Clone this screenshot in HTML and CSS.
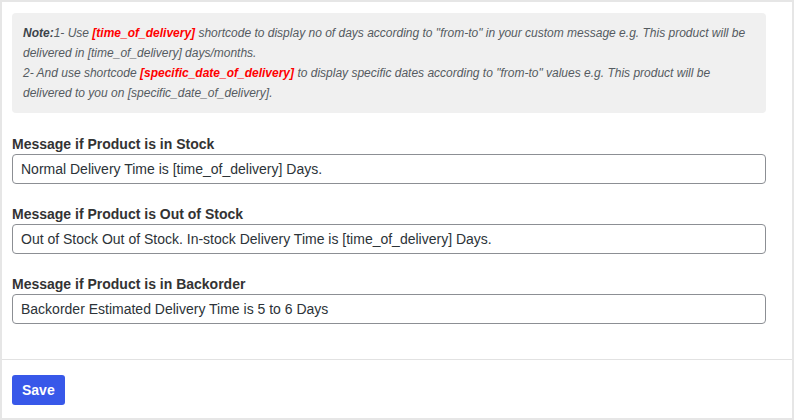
FILE: index.html
```html
<!DOCTYPE html>
<html>
<head>
<meta charset="utf-8">
<link rel="stylesheet" href="styles.css">
</head>
<body>
<div class="panel">
  <div class="content">
    <div class="note">
      <b class="note-label">Note:</b>1- Use <b class="code">[time_of_delivery]</b> shortcode to display no of days according to "from-to" in your custom message e.g. This product will be delivered in [time_of_delivery] days/months.<br>
      2- And use shortcode <b class="code">[specific_date_of_delivery]</b> to display specific dates according to "from-to" values e.g. This product will be delivered to you on [specific_date_of_delivery].
    </div>
    <div class="field">
      <label class="field-label">Message if Product is in Stock</label>
      <input class="field-input" type="text" value="Normal Delivery Time is [time_of_delivery] Days.">
    </div>
    <div class="field">
      <label class="field-label">Message if Product is Out of Stock</label>
      <input class="field-input" type="text" value="Out of Stock Out of Stock. In-stock Delivery Time is [time_of_delivery] Days.">
    </div>
    <div class="field">
      <label class="field-label">Message if Product is in Backorder</label>
      <input class="field-input" type="text" value="Backorder Estimated Delivery Time is 5 to 6 Days">
    </div>
  </div>
  <div class="footer">
    <button class="save-btn" type="button">Save</button>
  </div>
</div>
</body>
</html>
```
FILE: styles.css
```css
* { box-sizing: border-box; }
html, body { margin: 0; padding: 0; }
body {
  background: #e6e6e6;
  font-family: "Liberation Sans", Arial, sans-serif;
  width: 794px;
  height: 420px;
  padding: 2px 2px 2px 2px;
}
.panel {
  background: #fff;
  height: 416px;
  display: flex;
  flex-direction: column;
}
.content {
  padding: 11px 26px 0 10px;
  height: 358px;
  flex-shrink: 0;
  border-bottom: 1px solid #e2e2e2;
  display: flex;
  flex-direction: column;
  gap: 20px;
}
.note {
  background: #f0f0f0;
  border-radius: 4px;
  padding: 10px 10px 10px 11px;
  margin-bottom: 1px;
  font-size: 12px;
  line-height: 20px;
  font-style: italic;
  color: #555b61;
  height: 100px;
}
.note-label { color: #3c434a; }
.code { color: #ff0000; }
.field {
  display: flex;
  flex-direction: column;
}
.field-label {
  font-size: 14px;
  font-weight: bold;
  line-height: 20px;
  color: #333;
}
.field-input {
  height: 30px;
  border: 1px solid #8c8f94;
  border-radius: 4px;
  padding: 0 8px;
  font-family: "Liberation Sans", Arial, sans-serif;
  font-size: 14px;
  color: #2c3338;
  background: #fff;
  outline: none;
}
.footer {
  padding: 15px 10px;
}
.save-btn {
  background: #3858e9;
  color: #fff;
  border: none;
  border-radius: 3px;
  height: 30px;
  padding: 0 10px;
  font-family: "Liberation Sans", Arial, sans-serif;
  font-size: 14px;
  font-weight: bold;
}
```
